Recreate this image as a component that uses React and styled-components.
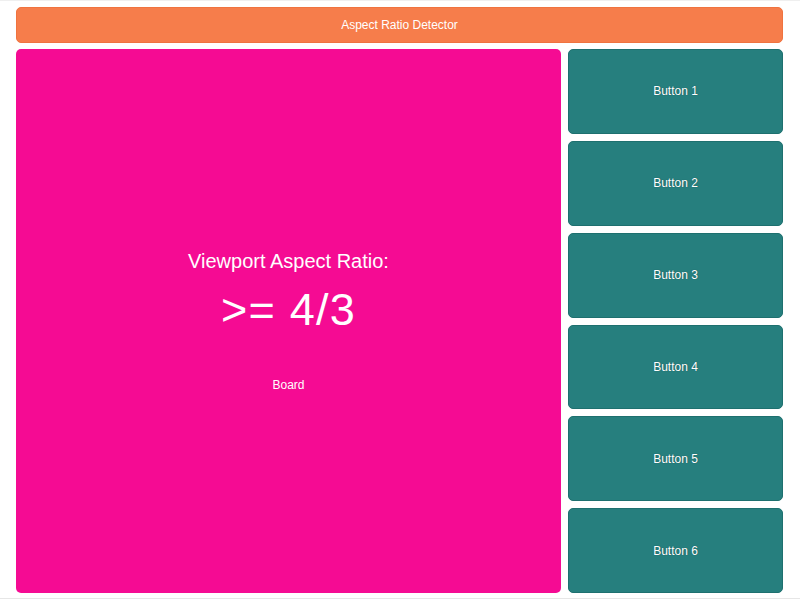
import React from "react";
import styled, { createGlobalStyle } from "styled-components";

const GlobalStyle = createGlobalStyle`
  html, body {
    margin: 0;
    padding: 0;
    background: #ffffff;
    font-family: "Liberation Sans", Arial, sans-serif;
  }
`;

const Page = styled.div`
  box-sizing: border-box;
  width: 800px;
  height: 599px;
  padding: 6px 17px 5px 16px;
  border-top: 1px solid #efefef;
  border-bottom: 1px solid #e6e6e6;
  display: flex;
  flex-direction: column;
  gap: 6px;
`;

const Header = styled.header`
  box-sizing: border-box;
  height: 36px;
  flex: none;
  display: flex;
  align-items: center;
  justify-content: center;
  background: #f67d4b;
  border: 1px solid #f0733f;
  border-radius: 5px;
  color: #ffffff;
  font-size: 12px;
`;

const Main = styled.main`
  flex: 1;
  display: grid;
  grid-template-columns: 545px 1fr;
  gap: 7px;
`;

const Board = styled.section`
  box-sizing: border-box;
  background: #f50b93;
  border-radius: 5px;
  display: flex;
  flex-direction: column;
  align-items: center;
  justify-content: center;
  color: #ffffff;
`;

const Title = styled.div`
  font-size: 20px;
  line-height: 23px;
`;

const Ratio = styled.div`
  font-size: 45px;
  line-height: 51px;
  letter-spacing: 1.2px;
  margin-top: 11px;
`;

const Label = styled.div`
  font-size: 12px;
  line-height: 14px;
  margin-top: 43px;
`;

const Sidebar = styled.aside`
  display: grid;
  grid-template-rows: repeat(6, 1fr);
  gap: 7px;
`;

const Button = styled.button`
  box-sizing: border-box;
  background: #267f7e;
  border: 1px solid #1e706f;
  border-radius: 5px;
  color: #ffffff;
  font-family: inherit;
  font-size: 12px;
  text-shadow: 0 0 1px rgba(0, 40, 40, 0.6);
  cursor: pointer;
`;

const buttons = [1, 2, 3, 4, 5, 6];

export default function App() {
  return (
    <>
      <GlobalStyle />
      <Page>
        <Header>Aspect Ratio Detector</Header>
        <Main>
          <Board>
            <Title>Viewport Aspect Ratio:</Title>
            <Ratio>&gt;= 4/3</Ratio>
            <Label>Board</Label>
          </Board>
          <Sidebar>
            {buttons.map((n) => (
              <Button key={n}>Button {n}</Button>
            ))}
          </Sidebar>
        </Main>
      </Page>
    </>
  );
}
